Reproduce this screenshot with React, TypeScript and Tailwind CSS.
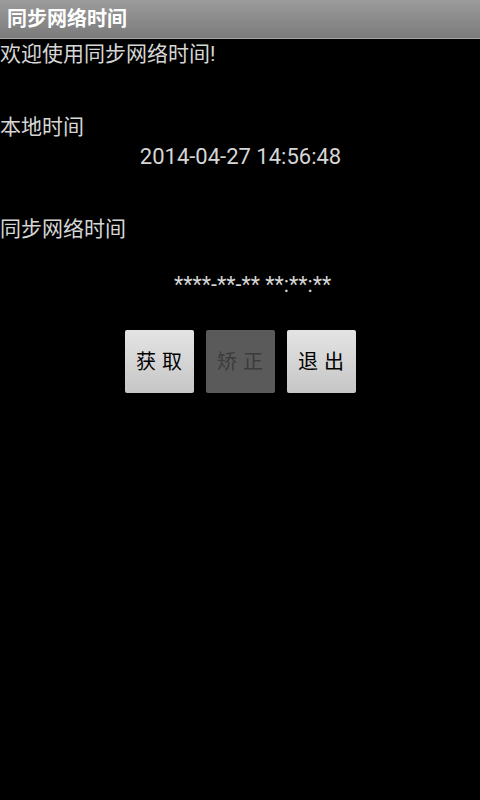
import React from "react";

const cjk = '"Roboto", "Noto Sans CJK SC", sans-serif';

export default function App() {
  return (
    <div className="w-[480px] h-[800px] bg-black flex flex-col" style={{ fontFamily: cjk }}>
      <div className="h-[38px] bg-gradient-to-b from-[#9c9c9c] to-[#7b7b7b] flex items-center pl-[7px] border-b border-[#a6a6a6] box-content">
        <span className="text-[20px] leading-[38px] font-bold text-white">同步网络时间</span>
      </div>
      <div className="flex flex-col text-[21px] leading-[30px] text-[#d6d6d6]">
        <div>欢迎使用同步网络时间!</div>
        <div className="mt-[43px]">本地时间</div>
        <div className="flex justify-center pl-[1px] text-[22px]">2014-04-27 14:56:48</div>
        <div className="mt-[42px]">同步网络时间</div>
        <div className="mt-[26px] pl-[174px] text-[21.5px]">****-**-** **:**:**</div>
      </div>
      <div className="mt-[30px] flex justify-center gap-[12px]">
        <div className="w-[69px] h-[63px] rounded-[2px] bg-gradient-to-b from-[#e4e4e4] to-[#c6c6c6] flex items-center justify-center text-[20px] text-black tracking-[6px] pl-[6px]">
          获取
        </div>
        <div className="w-[69px] h-[63px] rounded-[2px] bg-[#5a5a5a] flex items-center justify-center text-[20px] text-[#3c3c3c] tracking-[6px] pl-[6px]">
          矫正
        </div>
        <div className="w-[69px] h-[63px] rounded-[2px] bg-gradient-to-b from-[#e4e4e4] to-[#c6c6c6] flex items-center justify-center text-[20px] text-black tracking-[6px] pl-[6px]">
          退出
        </div>
      </div>
    </div>
  );
}
